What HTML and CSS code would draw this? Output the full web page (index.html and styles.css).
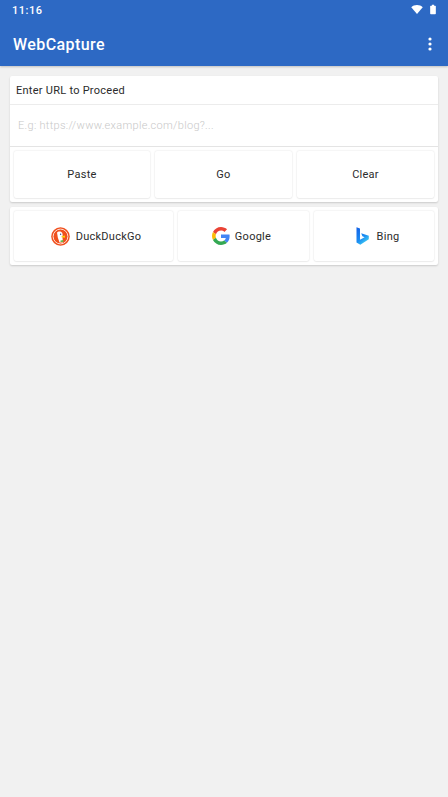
FILE: index.html
```html
<!DOCTYPE html>
<html>
<head>
    <title>WebCapture</title>
    <link rel="stylesheet" href="styles.css">
</head>
<body>
    <div class="app-bar">
        <div class="status-bar">
            <span class="clock">11:16</span>
            <div class="status-icons">
                <svg width="12" height="9" viewBox="0 0 14 10.500"><path d="M0.300 2.600C2 1 4.400 0 7 0s5 1 6.700 2.600L7 10.500z" fill="#fff"/></svg>
                <svg width="6" height="11" viewBox="0 0 7 11"><path d="M2.200 0h2.600v1H6a.8.8 0 0 1 .8.8v8.400a.8.8 0 0 1-.8.8H1a.8.8 0 0 1-.8-.8V1.800A.8.8 0 0 1 1 1h1.200z" fill="#fff"/></svg>
            </div>
        </div>
        <div class="toolbar">
            <span class="app-title">WebCapture</span>
            <svg class="menu-icon" width="4" height="14" viewBox="0 0 4 14"><circle cx="2" cy="2" r="1.600" fill="#fff"/><circle cx="2" cy="7" r="1.600" fill="#fff"/><circle cx="2" cy="12" r="1.600" fill="#fff"/></svg>
        </div>
    </div>

    <div class="content">
        <div class="card">
            <div class="card-title">Enter URL to Proceed</div>
            <div class="url-row">E.g: https://www.example.com/blog?...</div>
            <div class="button-row actions">
                <div class="btn">Paste</div>
                <div class="btn">Go</div>
                <div class="btn">Clear</div>
            </div>
        </div>

        <div class="card">
            <div class="button-row engines">
                <div class="btn btn-duck">
                    <svg width="19" height="19" viewBox="0 0 19 19">
                        <circle cx="9.500" cy="9.500" r="9.300" fill="#f0501e"/>
                        <circle cx="9.500" cy="9.500" r="7.400" fill="none" stroke="#fff" stroke-width="0.800"/>
                        <path d="M6 5.500C7 4 10 4 11 5.500C12 7 11.500 9 11.500 11L12 15.500H8.500C8 13 6.500 11 6.500 8.500C6.500 7.500 6 6.500 6 5.500z" fill="#fff"/>
                        <circle cx="9.600" cy="7.300" r="0.700" fill="#2d4f8e"/>
                        <path d="M10.500 9.300l3.500-.9v2.400l-3.500-.6z" fill="#fdd20a"/>
                        <path d="M9.500 13.500l2.800-.6v2.200H9.500z" fill="#65bc46"/>
                    </svg>
                    <span>DuckDuckGo</span>
                </div>
                <div class="btn btn-google">
                    <svg width="18" height="18" viewBox="0 0 48 48">
                        <path fill="#ea4335" d="M24 9.500c3.500 0 6.700 1.200 9.200 3.600l6.900-6.900C35.900 2.400 30.500 0 24 0 14.600 0 6.500 5.400 2.600 13.200l8 6.200C12.400 13.700 17.700 9.500 24 9.500z"/>
                        <path fill="#4285f4" d="M47 24.500c0-1.600-.1-3.100-.4-4.500H24v9h12.900c-.6 3-2.200 5.500-4.800 7.200l7.700 6C44.300 37.900 47 31.800 47 24.500z"/>
                        <path fill="#fbbc05" d="M10.500 28.600c-.5-1.400-.8-3-.8-4.600s.3-3.200.8-4.600l-8-6.200C.9 16.500 0 20.100 0 24s.9 7.500 2.600 10.800z"/>
                        <path fill="#34a853" d="M24 48c6.500 0 11.900-2.100 15.900-5.800l-7.700-6c-2.200 1.400-4.900 2.300-8.200 2.300-6.300 0-11.600-4.200-13.500-10l-8 6.200C6.500 42.600 14.600 48 24 48z"/>
                    </svg>
                    <span>Google</span>
                </div>
                <div class="btn btn-bing">
                    <svg width="13" height="18" viewBox="0 0 13 18">
                        <defs>
                            <linearGradient id="bingGrad" x1="0.100" y1="0" x2="0.700" y2="1">
                                <stop offset="0" stop-color="#1463e8"/>
                                <stop offset="0.600" stop-color="#1a8cf2"/>
                                <stop offset="1" stop-color="#45d6f2"/>
                            </linearGradient>
                        </defs>
                        <path d="M0.500 0.200L4 1.400V12.800L8.600 10.200 6.400 9.200 5.200 6.200 12.800 8.800V12.200L4.300 17.800 0.500 15.400z" fill="url(#bingGrad)"/>
                    </svg>
                    <span>Bing</span>
                </div>
            </div>
        </div>
    </div>
</body>
</html>
```
FILE: styles.css
```css
html, body {
    margin: 0;
    height: 100%;
}

body {
    background-color: #f1f1f1;
    color: #2b2b2b;
    font-family: Roboto, "Liberation Sans", sans-serif;
    font-size: 11px;
    letter-spacing: 0.26px;
    overflow: hidden;
}

.app-bar {
    height: 66px;
    background-color: #2d69c4;
    color: #fff;
    box-shadow: 0 1px 2px rgba(0, 0, 0, 0.2);
}

.status-bar {
    height: 20px;
    padding: 0 12px;
    display: flex;
    align-items: center;
    justify-content: space-between;
}

.clock {
    font-size: 11px;
    font-weight: 500;
    letter-spacing: 0.5px;
}

.status-icons {
    display: flex;
    align-items: center;
    gap: 7px;
    margin-bottom: 2px;
}

.toolbar {
    height: 46px;
    padding: 2px 16px 0 13px;
    box-sizing: border-box;
    display: flex;
    align-items: center;
    justify-content: space-between;
}

.app-title {
    font-size: 16px;
    font-weight: 500;
    letter-spacing: 0.42px;
}

.content {
    padding: 10px 10px 0;
    display: flex;
    flex-direction: column;
    gap: 5px;
}

.card {
    background-color: #fff;
    border-radius: 2px;
    box-shadow: 0 1px 2px rgba(0, 0, 0, 0.16);
}

.card-title {
    height: 28px;
    padding-left: 6px;
    display: flex;
    align-items: center;
    border-bottom: 1px solid #ececec;
}

.url-row {
    height: 41px;
    padding-left: 8px;
    display: flex;
    align-items: center;
    color: #c8c8c8;
    font-weight: 300;
    letter-spacing: 0.3px;
    border-bottom: 1px solid #e4e4e4;
}

.button-row {
    display: grid;
    gap: 5px;
    padding: 4px;
}

.actions {
    grid-template-columns: 136px 137px 137px;
    height: 47px;
}

.engines {
    grid-template-columns: 159px 131px 120px;
    height: 50px;
}

.btn {
    background-color: #fff;
    border-radius: 2px;
    box-shadow: 0 0 2px rgba(0, 0, 0, 0.14), 0 1px 1px rgba(0, 0, 0, 0.04);
    display: flex;
    align-items: center;
    justify-content: center;
    gap: 5px;
}

.btn-duck {
    gap: 6px;
    padding-left: 5px;
}

.btn-google {
    padding-right: 4px;
}

.btn-bing {
    gap: 8px;
    padding-left: 7px;
}
```
